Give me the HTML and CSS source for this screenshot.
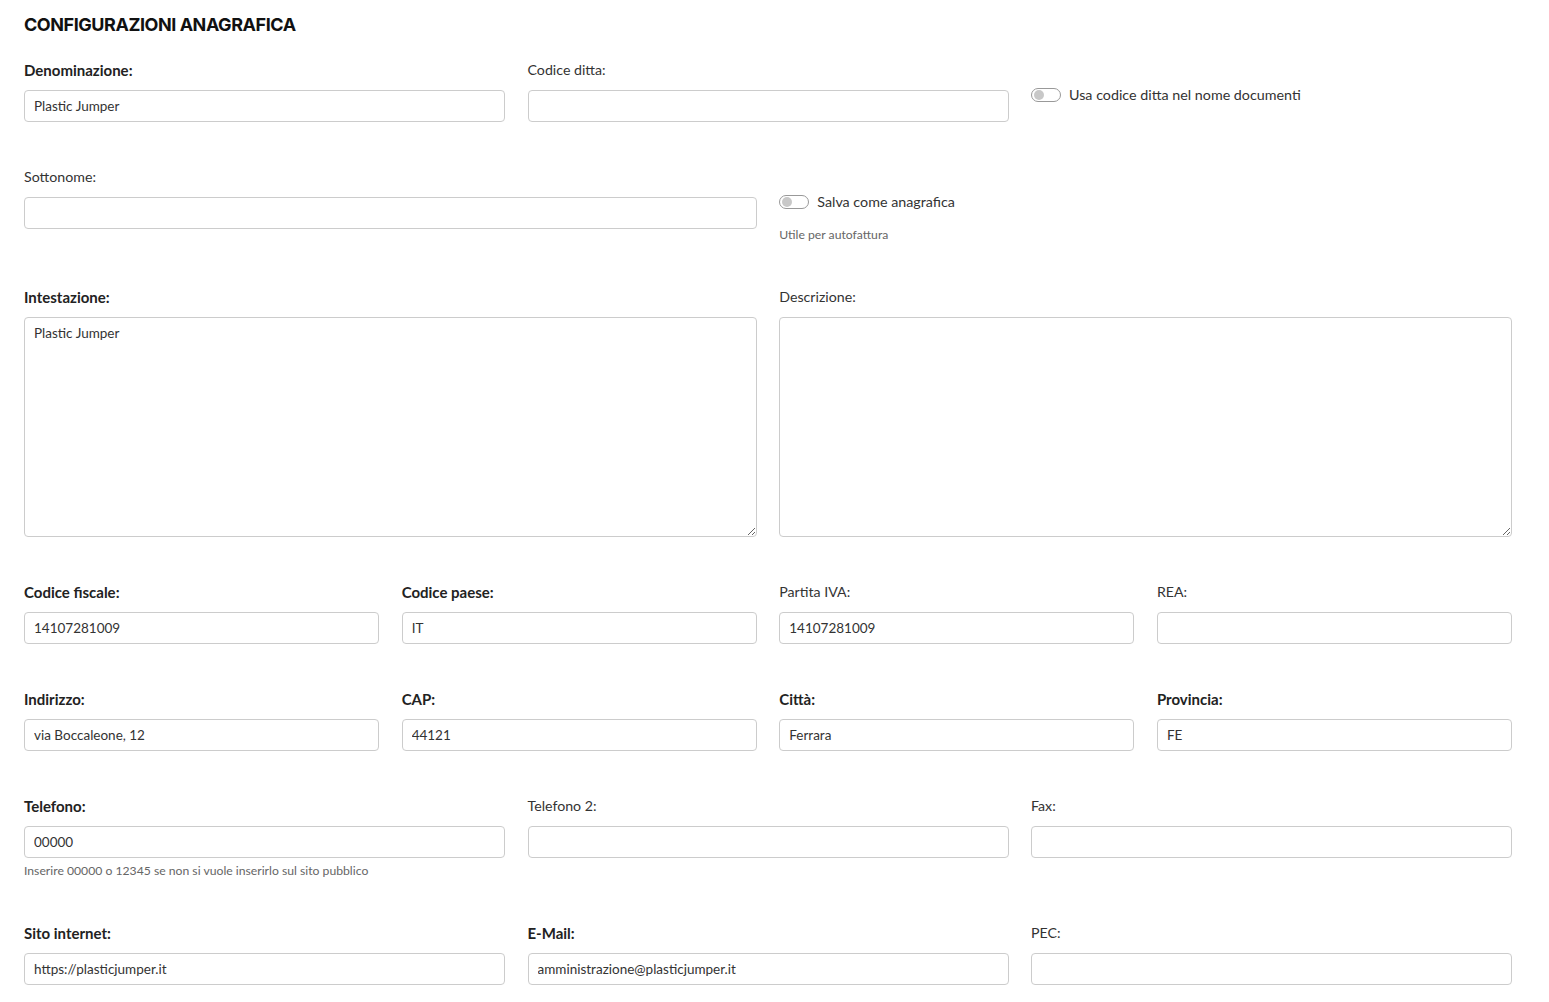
FILE: index.html
```html
<!DOCTYPE html>
<html lang="it">
<head>
    <meta charset="UTF-8">
    <meta name="viewport" content="width=device-width, initial-scale=1.0">
    <title>Configurazioni anagrafica</title>
    <link rel="stylesheet" href="styles.css">
</head>
<body>
    <div class="page">
        <h1 class="title">CONFIGURAZIONI ANAGRAFICA</h1>

        <div class="row cols-3">
            <div class="field">
                <label class="label req" for="denominazione">Denominazione:</label>
                <input class="input" type="text" id="denominazione" value="Plastic Jumper">
            </div>
            <div class="field">
                <label class="label" for="codiceDitta">Codice ditta:</label>
                <input class="input" type="text" id="codiceDitta">
            </div>
            <div class="field switch-field">
                <label class="switch">
                    <input type="checkbox">
                    <span class="track"></span>
                    <span class="switch-text">Usa codice ditta nel nome documenti</span>
                </label>
            </div>
        </div>

        <div class="row cols-2">
            <div class="field">
                <label class="label" for="sottonome">Sottonome:</label>
                <input class="input" type="text" id="sottonome">
            </div>
            <div class="field switch-field">
                <label class="switch">
                    <input type="checkbox">
                    <span class="track"></span>
                    <span class="switch-text">Salva come anagrafica</span>
                </label>
                <small class="help">Utile per autofattura</small>
            </div>
        </div>

        <div class="row cols-2">
            <div class="field">
                <label class="label req" for="intestazione">Intestazione:</label>
                <textarea class="input area" id="intestazione">Plastic Jumper</textarea>
            </div>
            <div class="field">
                <label class="label" for="descrizione">Descrizione:</label>
                <textarea class="input area" id="descrizione"></textarea>
            </div>
        </div>

        <div class="row cols-4">
            <div class="field">
                <label class="label req" for="cf">Codice fiscale:</label>
                <input class="input" type="text" id="cf" value="14107281009">
            </div>
            <div class="field">
                <label class="label req" for="paese">Codice paese:</label>
                <input class="input" type="text" id="paese" value="IT">
            </div>
            <div class="field">
                <label class="label" for="piva">Partita IVA:</label>
                <input class="input" type="text" id="piva" value="14107281009">
            </div>
            <div class="field">
                <label class="label" for="rea">REA:</label>
                <input class="input" type="text" id="rea">
            </div>
        </div>

        <div class="row cols-4">
            <div class="field">
                <label class="label req" for="indirizzo">Indirizzo:</label>
                <input class="input" type="text" id="indirizzo" value="via Boccaleone, 12">
            </div>
            <div class="field">
                <label class="label req" for="cap">CAP:</label>
                <input class="input" type="text" id="cap" value="44121">
            </div>
            <div class="field">
                <label class="label req" for="citta">Città:</label>
                <input class="input" type="text" id="citta" value="Ferrara">
            </div>
            <div class="field">
                <label class="label req" for="provincia">Provincia:</label>
                <input class="input" type="text" id="provincia" value="FE">
            </div>
        </div>

        <div class="row cols-3">
            <div class="field">
                <label class="label req" for="telefono">Telefono:</label>
                <input class="input" type="text" id="telefono" value="00000">
                <small class="help">Inserire 00000 o 12345 se non si vuole inserirlo sul sito pubblico</small>
            </div>
            <div class="field">
                <label class="label" for="telefono2">Telefono 2:</label>
                <input class="input" type="text" id="telefono2">
            </div>
            <div class="field">
                <label class="label" for="fax">Fax:</label>
                <input class="input" type="text" id="fax">
            </div>
        </div>

        <div class="row cols-3">
            <div class="field">
                <label class="label req" for="sito">Sito internet:</label>
                <input class="input" type="text" id="sito" value="https://plasticjumper.it">
            </div>
            <div class="field">
                <label class="label req" for="email">E-Mail:</label>
                <input class="input" type="text" id="email" value="amministrazione@plasticjumper.it">
            </div>
            <div class="field">
                <label class="label" for="pec">PEC:</label>
                <input class="input" type="text" id="pec">
            </div>
        </div>
    </div>
</body>
</html>
```

FILE: styles.css
```css
body {
    margin: 0;
    font-family: "Lato", "Noto Sans", sans-serif;
    color: #333;
    background: #fff;
}

.page {
    padding: 14px 37px 0 24px;
}

.title {
    margin: 0 0 24px;
    font-family: "Inter", "Lato", sans-serif;
    font-size: 18px;
    line-height: 22px;
    font-weight: 700;
    letter-spacing: -0.45px;
    color: #111;
}

.row {
    display: grid;
    column-gap: 22.5px;
    margin-bottom: 45px;
}

.cols-2 { grid-template-columns: repeat(2, 1fr); }
.cols-3 { grid-template-columns: repeat(3, 1fr); }
.cols-4 { grid-template-columns: repeat(4, 1fr); }

.field {
    display: flex;
    flex-direction: column;
    min-width: 0;
}

.label {
    display: block;
    margin-bottom: 10px;
    font-size: 14.2px;
    line-height: 20px;
    color: #333;
}

/* campi obbligatori in grassetto */
.label.req {
    font-size: 15px;
    font-weight: 700;
    color: #222;
}

.input {
    box-sizing: border-box;
    width: 100%;
    height: 32px;
    margin: 0;
    padding: 0 9px;
    border: 1px solid #ccc;
    border-radius: 4px;
    font-family: inherit;
    font-size: 13.5px;
    color: #333;
    background: #fff;
}

.area {
    height: 220px;
    padding: 7px 9px;
    line-height: 17px;
    resize: vertical;
}

.switch-field {
    padding-top: 28px;
}

.switch {
    display: flex;
    align-items: center;
    gap: 8px;
    cursor: pointer;
}

.switch input {
    display: none;
}

.track {
    position: relative;
    box-sizing: border-box;
    width: 30px;
    height: 14px;
    border: 1px solid #999;
    border-radius: 7px;
    background: #fff;
}

.track::after {
    content: "";
    position: absolute;
    left: 2px;
    top: 1px;
    width: 10px;
    height: 10px;
    border-radius: 50%;
    background: #c8c8c8;
}

.switch-text {
    font-size: 14.3px;
    line-height: 14px;
    color: #333;
}

.help {
    display: block;
    margin-top: 6px;
    font-size: 12.2px;
    line-height: 14px;
    color: #666;
}

.switch-field .help {
    margin-top: 19px;
}
```
